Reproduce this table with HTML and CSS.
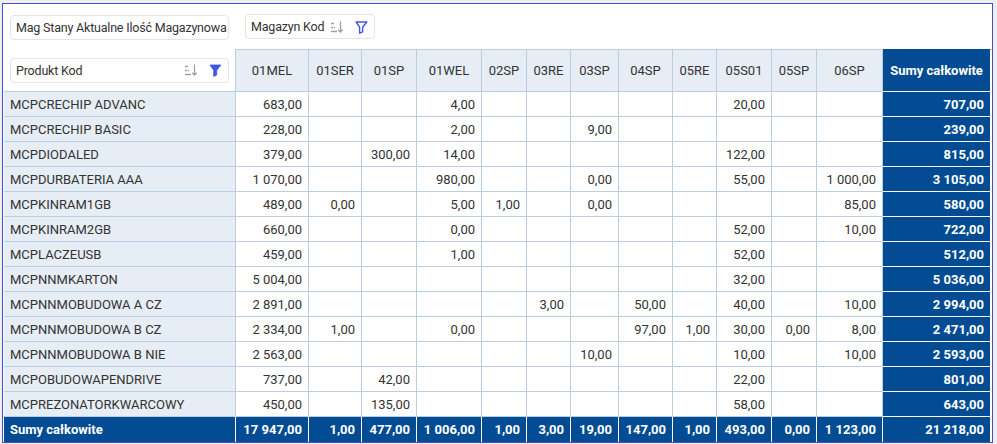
FILE: index.html
```html
<!DOCTYPE html>
<html lang="pl">
<head>
<meta charset="utf-8">
<title>Pivot</title>
<link rel="stylesheet" href="styles.css">
</head>
<body>
<div class="frame">
  <div class="top">
    <div class="chip chip-measure"><span class="chip-text">Mag Stany Aktualne Ilość Magazynowa</span></div>
    <div class="chip chip-col">
      <span class="chip-text">Magazyn Kod</span>
      <span class="icons">
        <svg class="ico" width="14" height="14" viewBox="0 0 14 14"><g stroke="#a0a0a0" stroke-width="1.3" fill="none"><path d="M1 3.5h3M1 7.5h2.2M4 7.5h1M1 11.5h6"/><path d="M10.5 1.5v10.5M8.3 9.8l2.2 2.2 2.2-2.2"/></g></svg>
        <svg class="ico" width="13" height="14" viewBox="0 0 13 14"><path d="M1.2 2h10.6l-4.2 5.2v4.6l-3 1.4v-6z" fill="none" stroke="#3f55e6" stroke-width="1.4" stroke-linejoin="round"/></svg>
      </span>
    </div>
  </div>
  <table class="pivot">
    <colgroup>
      <col class="c-label">
      <col style="width:73px"><col style="width:53px"><col style="width:55px"><col style="width:65px">
      <col style="width:45px"><col style="width:44px"><col style="width:48px"><col style="width:54px">
      <col style="width:44px"><col style="width:55px"><col style="width:45px"><col style="width:66px">
      <col class="c-tot">
    </colgroup>
    <thead>
      <tr>
        <th class="corner">
          <div class="chip chip-row">
            <span class="chip-text">Produkt Kod</span>
            <span class="icons">
              <svg class="ico" width="14" height="14" viewBox="0 0 14 14"><g stroke="#a0a0a0" stroke-width="1.3" fill="none"><path d="M1 3.5h3M1 7.5h2.2M4 7.5h1M1 11.5h6"/><path d="M10.5 1.5v10.5M8.3 9.8l2.2 2.2 2.2-2.2"/></g></svg>
              <svg class="ico" width="13" height="14" viewBox="0 0 13 14"><path d="M1 2h11l-4.3 5.3v4.7l-3 1.4v-6.1z" fill="#3f55e6" stroke="#3f55e6" stroke-width="0.8" stroke-linejoin="round"/></svg>
            </span>
          </div>
        </th>
        <th class="hd">01MEL</th><th class="hd">01SER</th><th class="hd">01SP</th><th class="hd">01WEL</th>
        <th class="hd">02SP</th><th class="hd">03RE</th><th class="hd">03SP</th><th class="hd">04SP</th>
        <th class="hd">05RE</th><th class="hd">05S01</th><th class="hd">05SP</th><th class="hd">06SP</th>
        <th class="hd tot">Sumy całkowite</th>
      </tr>
    </thead>
    <tbody>
      <tr><th class="lbl">MCPCRECHIP ADVANC</th><td>683,00</td><td></td><td></td><td>4,00</td><td></td><td></td><td></td><td></td><td></td><td>20,00</td><td></td><td></td><td class="tot">707,00</td></tr>
      <tr><th class="lbl">MCPCRECHIP BASIC</th><td>228,00</td><td></td><td></td><td>2,00</td><td></td><td></td><td>9,00</td><td></td><td></td><td></td><td></td><td></td><td class="tot">239,00</td></tr>
      <tr><th class="lbl">MCPDIODALED</th><td>379,00</td><td></td><td>300,00</td><td>14,00</td><td></td><td></td><td></td><td></td><td></td><td>122,00</td><td></td><td></td><td class="tot">815,00</td></tr>
      <tr><th class="lbl">MCPDURBATERIA AAA</th><td>1&nbsp;070,00</td><td></td><td></td><td>980,00</td><td></td><td></td><td>0,00</td><td></td><td></td><td>55,00</td><td></td><td>1&nbsp;000,00</td><td class="tot">3&nbsp;105,00</td></tr>
      <tr><th class="lbl">MCPKINRAM1GB</th><td>489,00</td><td>0,00</td><td></td><td>5,00</td><td>1,00</td><td></td><td>0,00</td><td></td><td></td><td></td><td></td><td>85,00</td><td class="tot">580,00</td></tr>
      <tr><th class="lbl">MCPKINRAM2GB</th><td>660,00</td><td></td><td></td><td>0,00</td><td></td><td></td><td></td><td></td><td></td><td>52,00</td><td></td><td>10,00</td><td class="tot">722,00</td></tr>
      <tr><th class="lbl">MCPLACZEUSB</th><td>459,00</td><td></td><td></td><td>1,00</td><td></td><td></td><td></td><td></td><td></td><td>52,00</td><td></td><td></td><td class="tot">512,00</td></tr>
      <tr><th class="lbl">MCPNNMKARTON</th><td>5&nbsp;004,00</td><td></td><td></td><td></td><td></td><td></td><td></td><td></td><td></td><td>32,00</td><td></td><td></td><td class="tot">5&nbsp;036,00</td></tr>
      <tr><th class="lbl">MCPNNMOBUDOWA A CZ</th><td>2&nbsp;891,00</td><td></td><td></td><td></td><td></td><td>3,00</td><td></td><td>50,00</td><td></td><td>40,00</td><td></td><td>10,00</td><td class="tot">2&nbsp;994,00</td></tr>
      <tr><th class="lbl">MCPNNMOBUDOWA B CZ</th><td>2&nbsp;334,00</td><td>1,00</td><td></td><td>0,00</td><td></td><td></td><td></td><td>97,00</td><td>1,00</td><td>30,00</td><td>0,00</td><td>8,00</td><td class="tot">2&nbsp;471,00</td></tr>
      <tr><th class="lbl">MCPNNMOBUDOWA B NIE</th><td>2&nbsp;563,00</td><td></td><td></td><td></td><td></td><td></td><td>10,00</td><td></td><td></td><td>10,00</td><td></td><td>10,00</td><td class="tot">2&nbsp;593,00</td></tr>
      <tr><th class="lbl">MCPOBUDOWAPENDRIVE</th><td>737,00</td><td></td><td>42,00</td><td></td><td></td><td></td><td></td><td></td><td></td><td>22,00</td><td></td><td></td><td class="tot">801,00</td></tr>
      <tr><th class="lbl">MCPREZONATORKWARCOWY</th><td>450,00</td><td></td><td>135,00</td><td></td><td></td><td></td><td></td><td></td><td></td><td>58,00</td><td></td><td></td><td class="tot">643,00</td></tr>
    </tbody>
    <tfoot>
      <tr class="sum"><th class="lbl">Sumy całkowite</th><td>17&nbsp;947,00</td><td>1,00</td><td>477,00</td><td>1&nbsp;006,00</td><td>1,00</td><td>3,00</td><td>19,00</td><td>147,00</td><td>1,00</td><td>493,00</td><td>0,00</td><td>1&nbsp;123,00</td><td>21&nbsp;218,00</td></tr>
    </tfoot>
  </table>
</div>
</body>
</html>
```

FILE: styles.css
```css
* { box-sizing: border-box; }

body {
  margin: 0;
  background: #efefef;
  font-family: Roboto, "Liberation Sans", sans-serif;
  font-size: 13px;
  color: #333333;
}

.frame {
  margin: 3px 0 0 2px;
  width: 991px;
  height: 440px;
  border: 1px solid #3f4fd8;
  background: #ffffff;
  padding: 0 1px;
  overflow: hidden;
}

.top {
  height: 45px;
  display: flex;
  align-items: flex-start;
  gap: 16px;
  padding: 10px 0 0 6px;
}

.chip {
  height: 25px;
  border: 1px solid #e4e4e4;
  border-radius: 4px;
  background: #ffffff;
  display: flex;
  align-items: center;
  padding: 0 6px 0 5px;
  white-space: nowrap;
  font-size: 12.5px;
  letter-spacing: -0.2px;
  font-weight: 400;
  color: #333333;
}

.chip-measure {
  width: 219px;
  margin-top: 1px;
}

.chip-col {
  min-width: 129px;
}

.chip-row {
  width: 219px;
  margin-left: 6px;
}

.chip-text {
  flex-shrink: 0;
}

.icons {
  display: flex;
  align-items: center;
  gap: 11px;
  margin-left: auto;
  padding-left: 6px;
}

.ico { display: block; flex-shrink: 0; }

.pivot {
  border-collapse: separate;
  border-spacing: 0;
  table-layout: fixed;
  width: 987px;
}

.c-label { width: 232px; }
.c-tot { width: 108px; }

.pivot th,
.pivot td {
  padding: 0 6px;
  border-right: 1px solid #bccee2;
  border-bottom: 1px solid #bccee2;
  white-space: nowrap;
  overflow: hidden;
}

.pivot thead tr { height: 43px; }
.pivot tbody tr,
.pivot tfoot tr { height: 25px; }

.pivot th.corner {
  padding: 0;
  border: none;
  border-right: 1px solid #bccee2;
  border-bottom: 1px solid #bccee2;
  background: #ffffff;
  text-align: left;
}

.pivot th.hd {
  background: #e6edf5;
  border-top: 1px solid #bccee2;
  font-weight: 400;
  text-align: center;
  color: #333333;
}

.pivot th.lbl {
  background: #e6edf5;
  font-weight: 400;
  text-align: left;
  padding-left: 6px;
  color: #333333;
}

.pivot td {
  text-align: right;
  background: #ffffff;
  color: #333333;
}

.pivot .tot {
  background: #034c93;
  color: #ffffff;
  font-weight: 700;
  border-color: #ffffff;
}

.pivot th.hd.tot {
  border-top-color: #034c93;
  font-weight: 700;
  color: #ffffff;
  background: #034c93;
  text-align: center;
}

.pivot tr.sum th,
.pivot tr.sum td {
  background: #034c93;
  color: #ffffff;
  font-weight: 700;
  border-right-color: #ffffff;
  border-bottom: none;
}
```
